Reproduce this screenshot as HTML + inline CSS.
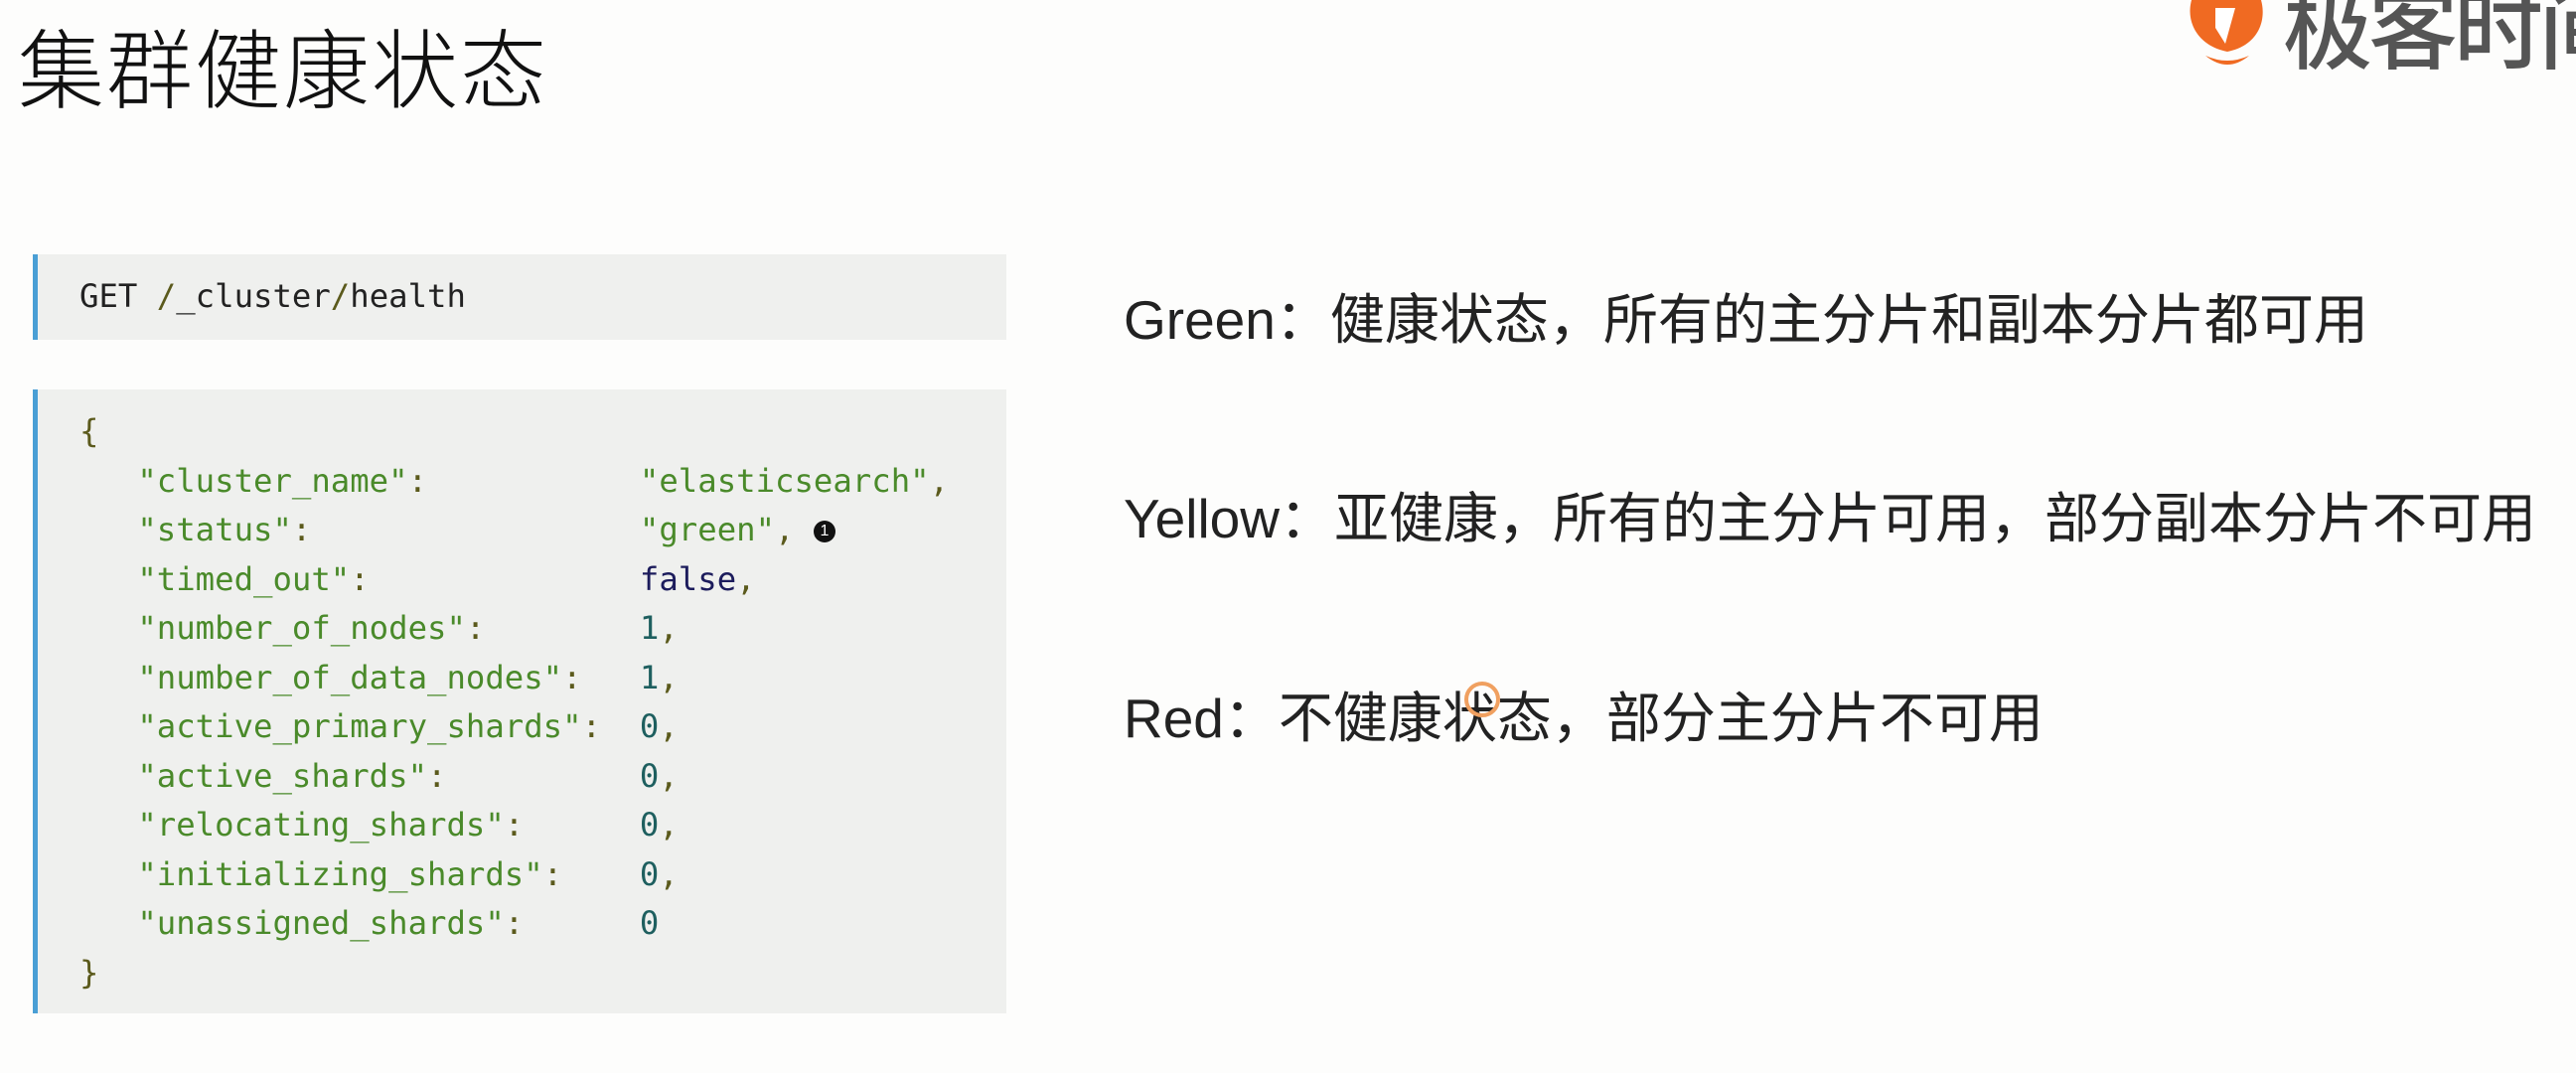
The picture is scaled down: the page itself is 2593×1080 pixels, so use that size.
<!DOCTYPE html>
<html><head><meta charset="utf-8"><style>
html,body{margin:0;padding:0;width:2593px;height:1080px;background:#fdfdfc;overflow:hidden;position:relative;font-family:"Liberation Sans","Noto Sans CJK SC",sans-serif}
.title{position:absolute;left:18px;top:22px;font-size:87px;color:#111;line-height:1;font-family:"Noto Sans CJK SC",sans-serif;font-weight:300;letter-spacing:2px}
.code{position:absolute;left:33px;width:980px;background:#eff0ee;border-left:5px solid #4a9fd5;box-sizing:border-box}
.mono{font-family:"DejaVu Sans Mono","Liberation Mono",monospace;font-size:32.3px;white-space:pre;position:absolute;left:42px}
.g{color:#4a8a2a}.p{color:#5b5a1c}.n{color:#1e5f5f}.b{color:#1c1c5c}.k{color:#222}
.r{position:absolute;left:1131px;font-size:55px;color:#222;white-space:nowrap;line-height:1}
.logo{position:absolute;left:2298px;top:-22px;font-size:90px;color:#555;font-family:"Noto Sans CJK SC",sans-serif;font-weight:500;line-height:1;letter-spacing:-4px;white-space:nowrap}
</style></head><body>
<div class="title">集群健康状态</div>
<svg style="position:absolute;left:2200px;top:0" width="90" height="75" viewBox="0 0 90 75">
<path d="M6 0 C0 22 12 46 42 52 C72 46 82 22 76 0 Z" fill="#f06a22"/>
<path d="M30 8 L50 8 L40 44 L30 28 Z" fill="#fff"/>
<path d="M20 56 Q42 74 64 56 Q42 66 20 56 Z" fill="#f06a22"/>
</svg>
<div class="logo">极客时间</div>
<div class="code" style="top:256px;height:86px"><div class="mono k" style="top:23px">GET <span class="p">/</span>_cluster<span class="p">/</span>health</div></div>
<div class="code" style="top:392px;height:628px">
<div class="mono" style="top:18px;line-height:49.5px"><span class="p">{</span>
   <span class="g">"cluster_name"</span><span class="p">:</span>           <span class="g">"elasticsearch"</span><span class="p">,</span>
   <span class="g">"status"</span><span class="p">:</span>                 <span class="g">"green"</span><span class="p">,</span> <span style="display:inline-block;width:22px;height:22px;border-radius:50%;background:#111;color:#fff;font-size:16px;line-height:22px;text-align:center;vertical-align:middle;font-family:'Liberation Sans'">1</span>
   <span class="g">"timed_out"</span><span class="p">:</span>              <span class="b">false</span><span class="p">,</span>
   <span class="g">"number_of_nodes"</span><span class="p">:</span>        <span class="n">1</span><span class="p">,</span>
   <span class="g">"number_of_data_nodes"</span><span class="p">:</span>   <span class="n">1</span><span class="p">,</span>
   <span class="g">"active_primary_shards"</span><span class="p">:</span>  <span class="n">0</span><span class="p">,</span>
   <span class="g">"active_shards"</span><span class="p">:</span>          <span class="n">0</span><span class="p">,</span>
   <span class="g">"relocating_shards"</span><span class="p">:</span>      <span class="n">0</span><span class="p">,</span>
   <span class="g">"initializing_shards"</span><span class="p">:</span>    <span class="n">0</span><span class="p">,</span>
   <span class="g">"unassigned_shards"</span><span class="p">:</span>      <span class="n">0</span>
<span class="p">}</span></div></div>
<div class="r" style="top:295px">Green：健康状态，所有的主分片和副本分片都可用</div>
<div class="r" style="top:495px">Yellow：亚健康，所有的主分片可用，部分副本分片不可用</div>
<div class="r" style="top:696px">Red：不健康状态，部分主分片不可用</div>
<div style="position:absolute;left:1474px;top:686px;width:36px;height:36px;border-radius:50%;border:4px solid #f0a060;box-sizing:border-box"></div>
</body></html>
